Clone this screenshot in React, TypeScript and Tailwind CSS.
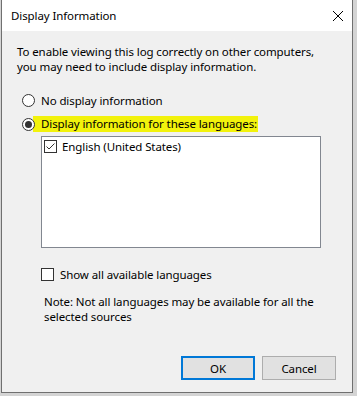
import React from "react";

const Radio = ({ checked }: { checked?: boolean }) => (
  <span className="relative z-10 flex h-[13px] w-[13px] shrink-0 items-center justify-center rounded-full border border-[#333333] bg-white">
    {checked && <span className="h-[7px] w-[7px] rounded-full bg-[#333333]" />}
  </span>
);

const CheckBox = ({ checked }: { checked?: boolean }) => (
  <span className="flex h-[13px] w-[13px] shrink-0 items-center justify-center border border-[#333333] bg-white">
    {checked && (
      <svg width="11" height="11" viewBox="0 0 11 11">
        <path d="M1.5 5.5 L4 8 L9.5 2.5" fill="none" stroke="#333333" strokeWidth="1" />
      </svg>
    )}
  </span>
);

const App: React.FC = () => {
  return (
    <div className="h-[396px] w-[357px] overflow-hidden bg-[#d4d4d4] font-['Noto_Sans',sans-serif] text-[11.5px] leading-[15px] tracking-[-0.1px] text-black">
      <div className="ml-px flex h-[393px] w-[352px] flex-col border-x border-b border-[#707070] bg-[#f0f0f0]">
        {/* title bar */}
        <div className="flex h-[31px] items-center justify-between bg-white pl-[9px] pr-[9px]">
          <span>Display Information</span>
          <svg width="10" height="10" viewBox="0 0 10 10">
            <path d="M0 0 L10 10 M10 0 L0 10" stroke="#000" strokeWidth="1" />
          </svg>
        </div>

        <p className="ml-[15px] mt-[13px]">
          To enable viewing this log correctly on other computers,
          <br />
          you may need to include display information.
        </p>

        <div className="ml-[20px] mt-[18px] flex h-[16px] items-center gap-[6px]">
          <Radio />
          <span>No display information</span>
        </div>

        <div className="ml-[20px] mt-[8px] flex h-[16px] items-center">
          <Radio checked />
          <span className="-ml-[2px] bg-[#f2f20c] pl-[8px] pr-[1px] leading-[16px]">
            Display information for these languages:
          </span>
        </div>

        <div className="ml-[39px] mt-[4px] h-[112px] w-[280px] border border-[#828790] bg-white pl-[2px] pt-[3px]">
          <div className="flex h-[13px] items-center gap-[5px]">
            <CheckBox checked />
            <span>English (United States)</span>
          </div>
        </div>

        <div className="ml-[39px] mt-[18px] flex h-[16px] items-center gap-[6px]">
          <CheckBox />
          <span>Show all available languages</span>
        </div>

        <p className="ml-[42px] mt-[12px]">
          Note: Not all languages may be available for all the
          <br />
          selected sources
        </p>

        <div className="mb-[12px] mr-[16px] mt-auto flex justify-end gap-[7px]">
          <button className="h-[24px] w-[74px] border-2 border-[#0078d7] bg-[#e1e1e1]">OK</button>
          <button className="h-[24px] w-[74px] border border-[#adadad] bg-[#e1e1e1]">Cancel</button>
        </div>
      </div>
    </div>
  );
};

export default App;
